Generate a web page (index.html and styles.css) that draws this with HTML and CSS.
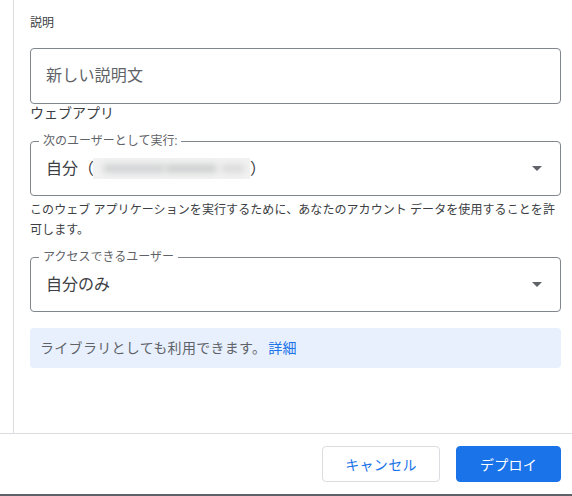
FILE: index.html
```html
<!DOCTYPE html>
<html lang="ja">
<head>
<meta charset="utf-8">
<link rel="stylesheet" href="styles.css">
</head>
<body>
<div class="dialog">
  <div class="main">
    <div class="gutter"></div>
    <div class="content">
      <div class="section-label">説明</div>
      <div class="field field-desc">
        <span class="placeholder">新しい説明文</span>
      </div>
      <div class="heading">ウェブアプリ</div>
      <div class="field field-select">
        <span class="float-label">次のユーザーとして実行:</span>
        <span class="value">自分（<span class="blur"><span class="smudge smudge-a"></span><span class="smudge smudge-b"></span><span class="smudge smudge-c"></span></span>）</span>
        <span class="arrow"></span>
      </div>
      <p class="helper">このウェブ アプリケーションを実行するために、あなたのアカウント データを使用することを許可します。</p>
      <div class="field field-select field-access">
        <span class="float-label">アクセスできるユーザー</span>
        <span class="value">自分のみ</span>
        <span class="arrow"></span>
      </div>
      <div class="info">ライブラリとしても利用できます。<a class="link" href="#">詳細</a></div>
    </div>
  </div>
  <div class="footer">
    <button class="btn btn-cancel">キャンセル</button>
    <button class="btn btn-deploy">デプロイ</button>
  </div>
  <div class="bottom-bar"></div>
</div>
</body>
</html>
```

FILE: styles.css
```css
* { box-sizing: border-box; }
html, body {
  margin: 0;
  padding: 0;
  background: #ffffff;
}
body {
  font-family: Roboto, "Noto Sans CJK JP", "Noto Sans", sans-serif;
  color: #3c4043;
  width: 572px;
  height: 496px;
  overflow: hidden;
}
.dialog {
  display: flex;
  flex-direction: column;
  height: 496px;
}
.main {
  display: flex;
  height: 434px;
  border-bottom: 1px solid #dadce0;
}
.gutter {
  width: 14px;
  border-right: 1px solid #dadce0;
  flex: none;
}
.content {
  flex: 1;
  padding: 15px 11px 0 16px;
  display: flex;
  flex-direction: column;
}
.section-label {
  font-size: 12px;
  line-height: 16px;
  color: #3c4043;
  margin-bottom: 17px;
}
.field {
  position: relative;
  border: 1px solid #80868b;
  border-radius: 4px;
  display: flex;
  align-items: center;
  padding: 0 18px 0 15px;
  flex: none;
}
.field-desc { height: 56px; }
.placeholder {
  font-size: 16px;
  line-height: 20px;
  color: #5f6368;
  letter-spacing: 0.2px;
}
.heading {
  font-size: 14px;
  line-height: 18px;
  color: #3c4043;
  margin: 0 0 19px;
}
.field-select {
  height: 55px;
  justify-content: space-between;
}
.float-label {
  position: absolute;
  top: -9px;
  left: 8px;
  padding: 0 4px;
  background: #ffffff;
  font-size: 12px;
  line-height: 16px;
  color: #5f6368;
}
.value {
  font-size: 16px;
  line-height: 20px;
  color: #3c4043;
  display: flex;
  align-items: center;
}
.blur {
  position: relative;
  display: inline-block;
  width: 157px;
  height: 21px;
  margin-left: -1px;
  background: #f2f2f2;
  overflow: hidden;
}
.smudge {
  position: absolute;
  top: 6px;
  height: 9px;
  background: #d2d3d4;
  border-radius: 4px;
  filter: blur(3px);
}
.smudge-a { left: 10px; width: 62px; }
.smudge-b { left: 72px; width: 52px; background: #cfd0d1; }
.smudge-c { left: 128px; width: 24px; background: #dcdcdd; }
.arrow {
  width: 0;
  height: 0;
  border-left: 5px solid transparent;
  border-right: 5px solid transparent;
  border-top: 5px solid #5f6368;
}
.helper {
  margin: 4px 0 17px;
  font-size: 12px;
  line-height: 20px;
  color: #3c4043;
  letter-spacing: 0.08px;
}
.info {
  margin-top: 16px;
  height: 40px;
  background: #e8f0fe;
  border-radius: 4px;
  padding: 0 10px;
  display: flex;
  align-items: center;
  font-size: 14px;
  line-height: 20px;
  color: #5f6368;
  letter-spacing: 0.3px;
}
.link {
  color: #1a73e8;
  text-decoration: none;
  margin-left: 2px;
}
.footer {
  height: 60px;
  display: flex;
  justify-content: flex-end;
  align-items: flex-start;
  gap: 16px;
  padding: 12px 11px 0 0;
}
.btn {
  height: 36px;
  border-radius: 4px;
  font-family: Roboto, "Noto Sans CJK JP", sans-serif;
  font-size: 14px;
  font-weight: 400;
  letter-spacing: 0.3px;
  cursor: pointer;
}
.btn-cancel {
  width: 118px;
  background: #ffffff;
  border: 1px solid #dadce0;
  color: #1a73e8;
}
.btn-deploy {
  width: 105px;
  background: #1a73e8;
  border: 1px solid #1a73e8;
  color: #ffffff;
}
.bottom-bar {
  height: 2px;
  background: #5f6368;
}
```
